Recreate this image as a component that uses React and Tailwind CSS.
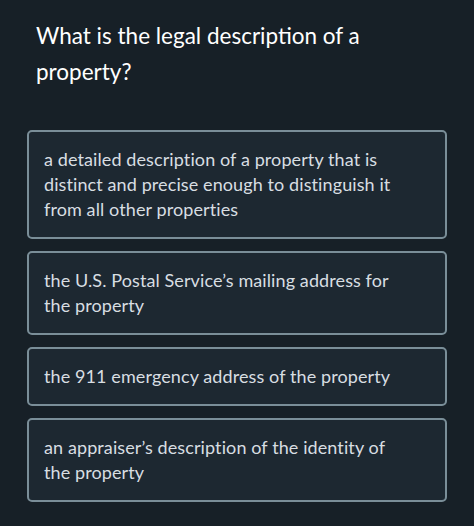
const opciones = [
  'a detailed description of a property that is distinct and precise enough to distinguish it from all other properties',
  'the U.S. Postal Service’s mailing address for the property',
  'the 911 emergency address of the property',
  'an appraiser’s description of the identity of the property',
]

export default function App() {
  return (
    <div
      className="min-h-screen w-full bg-[#172027] px-[27px] pt-[18px]"
      style={{ fontFamily: 'Lato, "Noto Sans", sans-serif' }}
    >
      <h1 className="pl-[9px] pr-4 text-[22.5px] leading-[36px] font-normal text-white">
        What is the legal description of a property?
      </h1>
      <div className="mt-[40px] flex flex-col gap-[12px]">
        {opciones.map((texto) => (
          <button
            key={texto}
            className="w-full rounded-[5px] border-2 border-[#7a8e98] bg-[#1d2831] py-[15px] pl-[15px] pr-[40px] text-left text-[18px] leading-[25px] tracking-[0.1px] text-[#d8dee2]"
          >
            {texto}
          </button>
        ))}
      </div>
    </div>
  )
}
